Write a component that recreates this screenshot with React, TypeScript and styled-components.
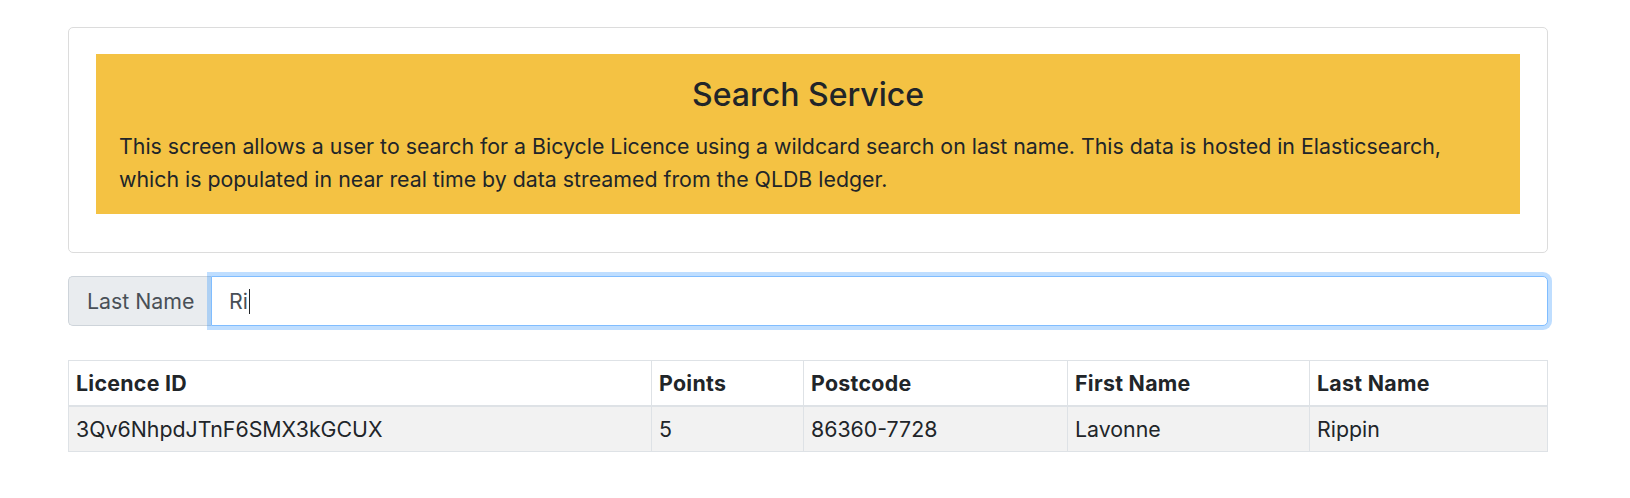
import React from "react";
import styled, { createGlobalStyle } from "styled-components";

const Global = createGlobalStyle`
  html, body { margin: 0; padding: 0; background: #fff; }
  body {
    font-family: Inter, "Noto Sans", "Liberation Sans", sans-serif;
    color: #212529;
    font-size: 21.33px;
    line-height: 32px;
  }
  * { box-sizing: border-box; }
`;

const Page = styled.div`
  padding: 27px 82px 40px 68px;
`;

const Card = styled.section`
  border: 1px solid #dcdcdc;
  border-radius: 5px;
  padding: 26px 27px 26px 27px;
`;

const Banner = styled.div`
  background: #f4c243;
  padding: 22px 23px 19px;
  margin-bottom: 12px;
`;

const Title = styled.h4`
  margin: 0 0 16px;
  font-size: 32px;
  line-height: 38px;
  font-weight: 500;
  text-align: center;
`;

const Lead = styled.p`
  margin: 0;
  font-size: 21.33px;
  line-height: 32.5px;
`;

const InputGroup = styled.div`
  display: flex;
  margin-top: 23px;
  height: 50px;
`;

const Addon = styled.label`
  display: flex;
  align-items: center;
  padding: 0 16px 0 18px;
  width: 143px;
  background: #e9ecef;
  border: 1px solid #ced4da;
  border-right: none;
  border-radius: 5px 0 0 5px;
  color: #495057;
  font-size: 21.33px;
  white-space: nowrap;
`;

const Field = styled.div`
  flex: 1;
  display: flex;
  align-items: center;
  padding: 0 17px;
  border: 1px solid #80bdff;
  border-radius: 0 5px 5px 0;
  box-shadow: 0 0 0 4px rgba(0, 123, 255, 0.25);
  color: #495057;
  font-size: 21.33px;
  background: #fff;
`;

const Caret = styled.span`
  display: inline-block;
  width: 1px;
  height: 25px;
  background: #212529;
  margin-left: 1px;
`;

const Table = styled.table`
  margin-top: 34px;
  width: 1479px;
  border-collapse: collapse;
  table-layout: fixed;
  font-size: 21.33px;
`;

const HeadCell = styled.th`
  text-align: left;
  font-weight: 700;
  letter-spacing: 0.3px;
  padding: 6px 7px;
  line-height: 32px;
  border: 1px solid #dee2e6;
  border-bottom-width: 2px;
`;

const Row = styled.tr<{ $striped?: boolean }>`
  background: ${(p) => (p.$striped ? "#f2f2f2" : "#fff")};
`;

const Cell = styled.td`
  padding: 6px 7px;
  line-height: 32px;
  border: 1px solid #dee2e6;
`;

const columns = [
  { label: "Licence ID", width: 583 },
  { label: "Points", width: 152 },
  { label: "Postcode", width: 264 },
  { label: "First Name", width: 242 },
  { label: "Last Name", width: 238 },
];

const rows = [["3Qv6NhpdJTnF6SMX3kGCUX", "5", "86360-7728", "Lavonne", "Rippin"]];

export default function App() {
  return (
    <Page>
      <Global />
      <Card>
        <Banner>
          <Title>Search Service</Title>
          <Lead>
            This screen allows a user to search for a Bicycle Licence using a wildcard search on last
            name. This data is hosted in Elasticsearch, which is populated in near real time by data
            streamed from the QLDB ledger.
          </Lead>
        </Banner>
      </Card>
      <InputGroup>
        <Addon>Last Name</Addon>
        <Field role="textbox">
          Ri
          <Caret />
        </Field>
      </InputGroup>
      <Table>
        <colgroup>
          {columns.map((c) => (
            <col key={c.label} style={{ width: c.width }} />
          ))}
        </colgroup>
        <thead>
          <tr>
            {columns.map((c) => (
              <HeadCell key={c.label}>{c.label}</HeadCell>
            ))}
          </tr>
        </thead>
        <tbody>
          {rows.map((r, i) => (
            <Row key={i} $striped={i % 2 === 0}>
              {r.map((v, j) => (
                <Cell key={j}>{v}</Cell>
              ))}
            </Row>
          ))}
        </tbody>
      </Table>
    </Page>
  );
}
